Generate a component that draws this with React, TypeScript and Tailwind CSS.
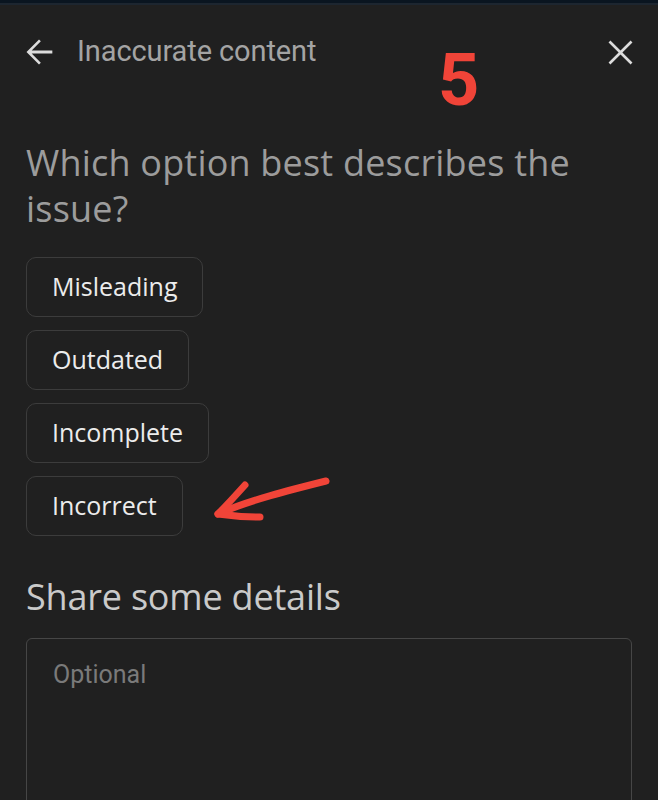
const options = ["Misleading", "Outdated", "Incomplete", "Incorrect"];

export default function App() {
  return (
    <div className="relative w-[658px] h-[800px] overflow-hidden bg-[#202020]">
      <div className="h-[3px] bg-[#0a1520]" />
      <div className="h-[2px] bg-[#1d2630]" />

      {/* header */}
      <div className="flex items-center h-[94px] pl-[19px] pr-[17px]">
        <svg width="40" height="40" viewBox="0 0 24 24" className="text-[#dcdcdc]">
          <path d="M20 11.1H7.6l5.5-5.5L12 4.5 4.5 12l7.5 7.5 1.1-1.1-5.5-5.5H20z" fill="currentColor" />
        </svg>
        <span className="ml-[18px] text-[29px] text-[#a4a4a4] font-['Roboto',sans-serif] tracking-[-0.1px]">
          Inaccurate content
        </span>
        <svg width="41" height="41" viewBox="0 0 24 24" className="ml-auto text-[#dcdcdc]">
          <path d="M19 6.1 17.9 5 12 10.9 6.1 5 5 6.1 10.9 12 5 17.9 6.1 19 12 13.1 17.9 19 19 17.9 13.1 12z" fill="currentColor" />
        </svg>
      </div>

      {/* red annotation number */}
      <div className="absolute left-[438px] top-[45px] text-[72px] font-bold leading-[72px] text-[#f04438] font-['Roboto',sans-serif]">
        5
      </div>

      <div className="px-[26px] font-['Open_Sans',sans-serif]">
        <h2 className="mt-[41px] text-[36px] leading-[46px] tracking-[0.2px] text-[#9c9c9c] font-normal">
          Which option best describes the issue?
        </h2>

        <div className="mt-[25px] flex flex-col items-start gap-[13px]">
          {options.map((o) => (
            <div
              key={o}
              className="h-[60px] flex items-center px-[25px] rounded-[10px] border border-[#3c3c3c] text-[25px] font-medium text-[#ececec]"
            >
              {o}
            </div>
          ))}
        </div>

        <h2 className="mt-[41px] text-[36px] leading-[40px] tracking-[-0.2px] text-[#cacaca] font-normal">
          Share some details
        </h2>

        <div className="mt-[21px] h-[200px] rounded-[6px] border border-[#464646] px-[26px] pt-[21px]">
          <span className="block text-[25px] leading-[30px] text-[#7a7a7a] font-['Roboto',sans-serif]">Optional</span>
        </div>
      </div>

      {/* red hand-drawn arrow */}
      <svg className="absolute left-0 top-0 pointer-events-none" width="658" height="800">
        <g fill="none" stroke="#f04438" strokeWidth="7" strokeLinecap="round" strokeLinejoin="round">
          <path d="M326 481 C 290 490, 250 500, 218 514" />
          <path d="M245 485 C 236 495, 227 505, 218 514 C 232 516, 246 517, 260 517" />
        </g>
      </svg>
    </div>
  );
}
